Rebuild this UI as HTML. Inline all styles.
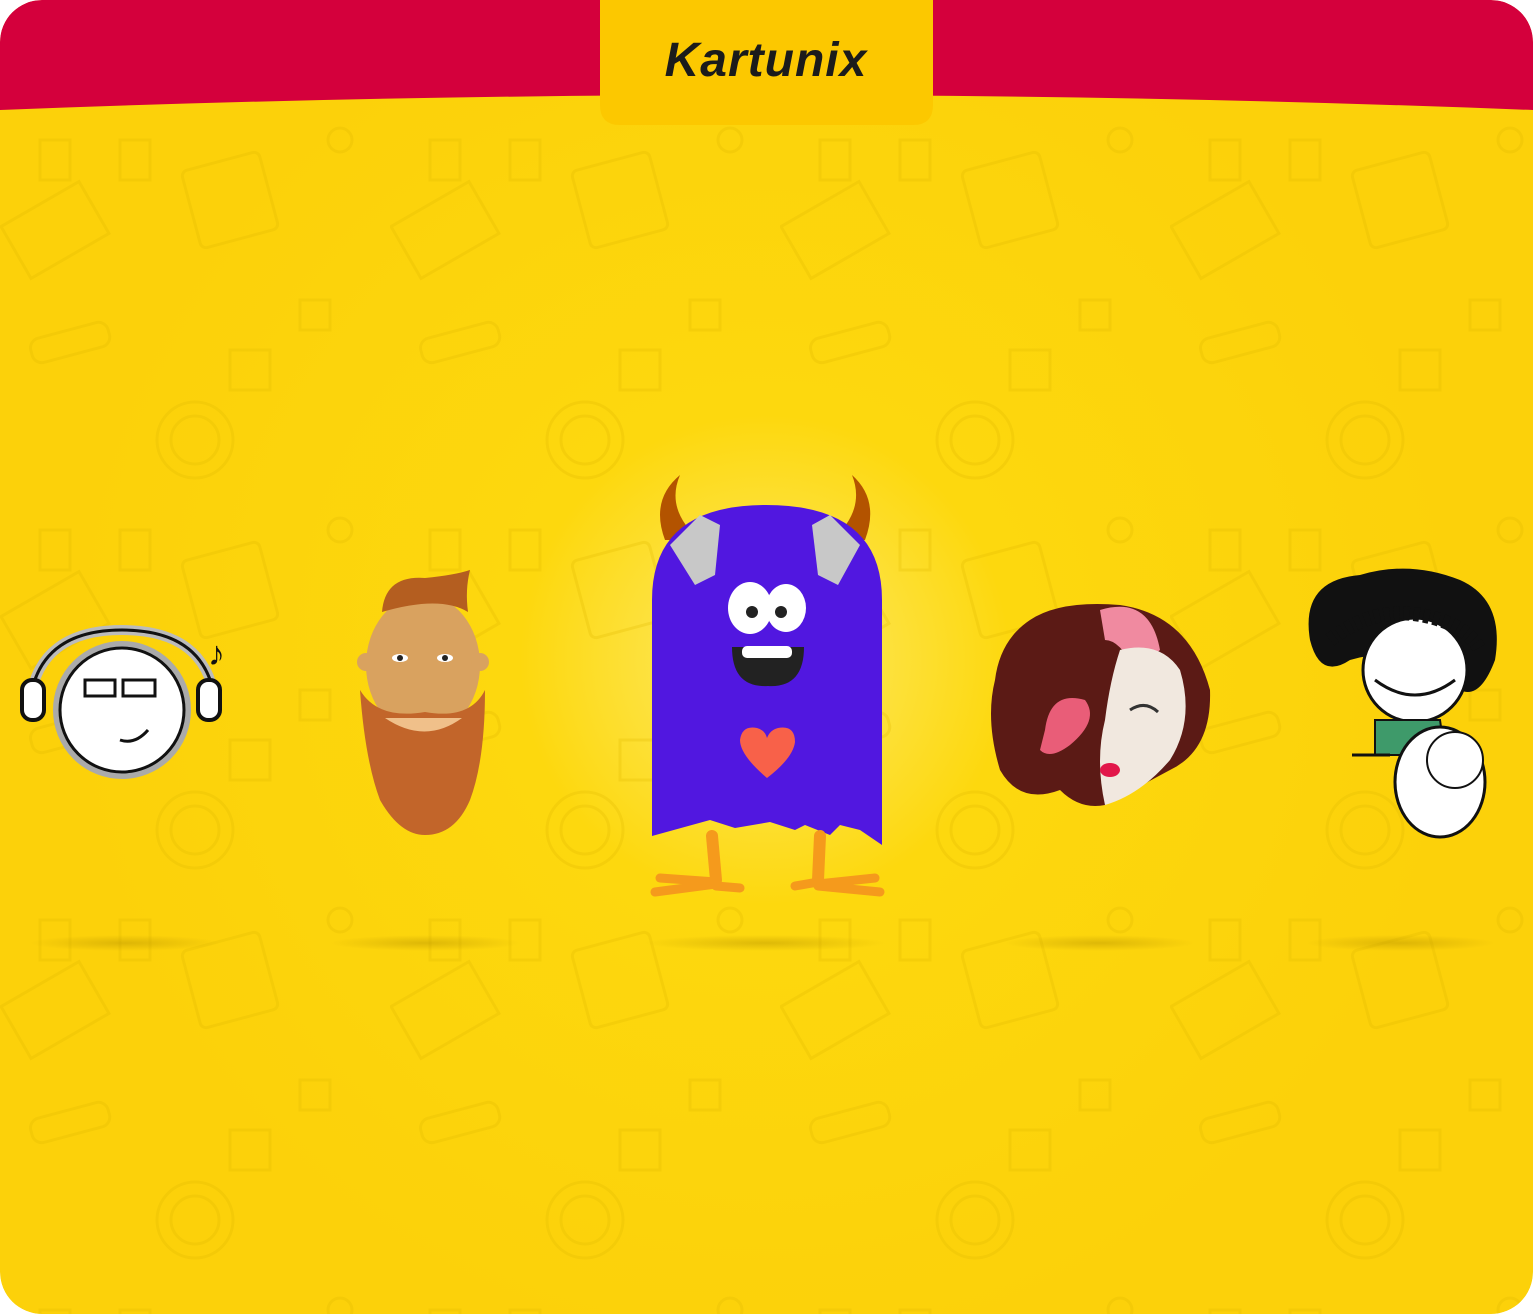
<!DOCTYPE html>
<html><head><meta charset="utf-8"><style>
html,body{margin:0;padding:0;background:#fff;width:1533px;height:1314px;overflow:hidden}
</style></head><body>
<svg width="1533" height="1314" viewBox="0 0 1533 1314" xmlns="http://www.w3.org/2000/svg">
<defs>
<clipPath id="c"><rect x="0" y="0" width="1533" height="1314" rx="42"/></clipPath>
<radialGradient id="g" cx="765" cy="660" r="700" gradientUnits="userSpaceOnUse">
<stop offset="0" stop-color="#fff3a0"/><stop offset="0.12" stop-color="#fde44a"/><stop offset="0.35" stop-color="#fdd80e"/><stop offset="1" stop-color="#fcd10a"/></radialGradient>
<radialGradient id="sh" cx="0.5" cy="0.5" r="0.5"><stop offset="0" stop-color="#b89400" stop-opacity="0.45"/><stop offset="1" stop-color="#b89400" stop-opacity="0"/></radialGradient>
<pattern id="p" x="0" y="100" width="390" height="390" patternUnits="userSpaceOnUse">
<g fill="none" stroke="#e0b800" stroke-width="3" opacity="0.55">
<rect x="190" y="60" width="80" height="80" rx="6" transform="rotate(-15 230 100)"/>
<rect x="10" y="100" width="90" height="60" transform="rotate(-30 55 130)"/>
<rect x="40" y="40" width="30" height="40"/>
<rect x="120" y="40" width="30" height="40"/>
<circle cx="195" cy="340" r="38"/><circle cx="195" cy="340" r="24"/>
<rect x="30" y="230" width="80" height="25" rx="10" transform="rotate(-15 70 242)"/>
<rect x="300" y="200" width="30" height="30"/>
<circle cx="340" cy="40" r="12"/>
<rect x="230" y="250" width="40" height="40"/>
</g></pattern>
</defs>
<g clip-path="url(#c)">
<rect width="1533" height="1314" fill="url(#g)"/>
<rect width="1533" height="1314" fill="url(#p)" opacity="0.5"/>
<path d="M0 0H1533V110Q765 80 0 110Z" fill="#d4003c"/>
<path d="M600 0H933V105Q933 125 913 125H620Q600 125 600 105Z" fill="#fcc800"/>
<text x="766" y="76" text-anchor="middle" font-family="Liberation Sans,sans-serif" font-style="italic" font-weight="bold" font-size="48" fill="#1b1b1b" letter-spacing="1">Kartunix</text>
<ellipse cx="125" cy="943" rx="95" ry="8" fill="url(#sh)"/>
<ellipse cx="425" cy="943" rx="95" ry="8" fill="url(#sh)"/>
<ellipse cx="765" cy="943" rx="120" ry="8" fill="url(#sh)"/>
<ellipse cx="1100" cy="943" rx="95" ry="8" fill="url(#sh)"/>
<ellipse cx="1400" cy="943" rx="95" ry="8" fill="url(#sh)"/>
<!-- headphone guy -->
<path d="M30 700 Q40 630 122 630 Q205 630 215 700" fill="none" stroke="#bbb" stroke-width="10"/>
<path d="M30 700 Q40 630 122 630 Q205 630 215 700" fill="none" stroke="#111" stroke-width="3"/>
<circle cx="122" cy="710" r="65" fill="#fff" stroke="#aaa" stroke-width="8"/>
<circle cx="122" cy="710" r="62" fill="#fff" stroke="#111" stroke-width="3"/>
<rect x="22" y="680" width="22" height="40" rx="10" fill="#fff" stroke="#111" stroke-width="4"/>
<rect x="198" y="680" width="22" height="40" rx="10" fill="#fff" stroke="#111" stroke-width="4"/>
<rect x="85" y="680" width="30" height="16" fill="none" stroke="#111" stroke-width="3"/>
<rect x="123" y="680" width="32" height="16" fill="none" stroke="#111" stroke-width="3"/>
<path d="M120 740 Q135 745 148 730" fill="none" stroke="#111" stroke-width="3"/>
<text x="208" y="665" font-size="34" fill="#111">♪</text>
<!-- beard man -->
<ellipse cx="423" cy="665" rx="57" ry="70" fill="#d9a25f"/>
<circle cx="366" cy="662" r="9" fill="#d9a25f"/><circle cx="480" cy="662" r="9" fill="#d9a25f"/>
<path d="M382 612 Q385 575 425 578 Q455 575 470 570 Q465 590 468 612 Q440 595 382 612Z" fill="#b45e20"/>
<path d="M360 690 Q365 760 380 800 Q400 835 425 835 Q455 835 470 800 Q485 760 485 690 Q470 720 425 712 Q378 720 360 690Z" fill="#c2652a"/>
<ellipse cx="400" cy="658" rx="8" ry="4" fill="#fff"/><ellipse cx="445" cy="658" rx="8" ry="4" fill="#fff"/>
<circle cx="400" cy="658" r="3" fill="#222"/><circle cx="445" cy="658" r="3" fill="#222"/>
<path d="M385 718 Q425 745 462 718" fill="#f0c08a"/>
<!-- monster -->
<path d="M665 540 Q650 500 680 475 Q665 510 700 540Z" fill="#b35300"/>
<path d="M865 540 Q880 500 852 475 Q866 510 832 540Z" fill="#b35300"/>
<path d="M652 600 Q652 505 766 505 Q882 505 882 600 V845 L860 830 L840 825 L830 835 L805 825 L795 830 L770 822 L735 828 L710 820 L652 836Z" fill="#5117e0"/>
<path d="M670 545 L700 515 L720 525 L715 575 L695 585 Z" fill="#c8c8c8"/>
<path d="M860 545 L830 515 L812 525 L818 575 L838 585 Z" fill="#c8c8c8"/>
<ellipse cx="750" cy="608" rx="22" ry="26" fill="#fff"/><ellipse cx="786" cy="608" rx="20" ry="24" fill="#fff"/>
<circle cx="752" cy="612" r="6" fill="#222"/><circle cx="781" cy="612" r="6" fill="#222"/>
<path d="M732 647 H804 Q804 688 768 686 Q732 688 732 647Z" fill="#222"/>
<rect x="742" y="646" width="50" height="12" rx="5" fill="#fff"/>
<path d="M767 778 Q740 755 740 740 Q742 725 757 728 Q765 730 767 738 Q770 730 778 728 Q795 725 795 742 Q793 758 767 778Z" fill="#f86149"/>
<g stroke="#f59a1c" stroke-linecap="round" fill="none"><path d="M712 836 L716 880" stroke-width="12"/><path d="M820 836 L818 880" stroke-width="12"/>
<path d="M716 882 L660 878 M716 884 L655 892 M716 886 L740 888" stroke-width="9"/>
<path d="M818 882 L795 886 M818 884 L875 878 M818 886 L880 892" stroke-width="9"/></g>
<!-- woman -->
<path d="M1030 620 Q1060 600 1120 605 Q1190 615 1210 690 Q1212 750 1170 770 L1105 805 Q1080 810 1060 790 Q1020 805 1000 770 Q985 720 995 680 Q1000 640 1030 620Z" fill="#5b1a15"/>
<path d="M1100 610 Q1150 595 1160 650 L1135 670 Q1120 640 1105 640Z" fill="#f08aa0"/>
<path d="M1120 650 Q1160 640 1180 670 Q1195 720 1170 760 Q1140 795 1105 805 Q1095 760 1105 720 Q1110 680 1120 650Z" fill="#f1e8df"/>
<path d="M1045 730 Q1050 690 1085 700 Q1100 720 1070 745 Q1050 760 1040 750Z" fill="#e95d78"/>
<ellipse cx="1110" cy="770" rx="10" ry="7" fill="#e2174a"/>
<path d="M1130 710 Q1145 700 1158 712" fill="none" stroke="#333" stroke-width="3"/>
<!-- curly kid -->
<path d="M1310 640 Q1300 580 1360 575 Q1410 560 1460 580 Q1505 600 1495 660 Q1480 700 1460 690 Q1420 640 1350 660 Q1320 680 1310 640Z" fill="#111"/>
<circle cx="1415" cy="670" r="52" fill="#fff" stroke="#111" stroke-width="3"/>
<path d="M1330 640 Q1380 600 1440 620 Q1470 630 1480 650" fill="none" stroke="#111" stroke-width="14" stroke-dasharray="6 4"/>
<path d="M1375 680 Q1415 710 1455 680" fill="none" stroke="#111" stroke-width="3"/>
<path d="M1375 720 H1440 L1445 755 H1375Z" fill="#3e9a6a" stroke="#111" stroke-width="2"/>
<path d="M1352 755 H1390" stroke="#111" stroke-width="3"/>
<ellipse cx="1440" cy="782" rx="45" ry="55" fill="#fff" stroke="#111" stroke-width="3"/>
<circle cx="1455" cy="760" r="28" fill="#fff" stroke="#111" stroke-width="2"/>
</g>
<path d="M0 42 A42 42 0 0 1 42 0 H0Z M1533 42 A42 42 0 0 0 1491 0 H1533Z M0 1272 A42 42 0 0 0 42 1314 H0Z M1533 1272 A42 42 0 0 1 1491 1314 H1533Z" fill="#fff"/>
</svg>
</body></html>
